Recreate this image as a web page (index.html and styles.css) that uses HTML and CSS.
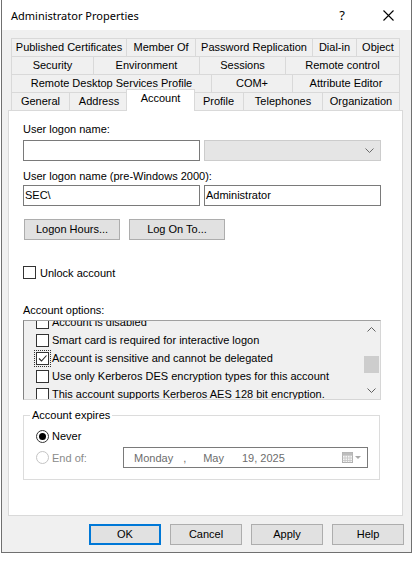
FILE: index.html
```html
<!DOCTYPE html>
<html>
<head>
<meta charset="utf-8">
<title>Administrator Properties</title>
<link rel="stylesheet" href="styles.css">
</head>
<body>
<div class="window">
  <div class="titlebar">
    <span class="title">Administrator Properties</span>
    <span class="help">?</span>
    <span class="close"><svg width="11" height="11" viewBox="0 0 11 11"><path d="M0.5 0.5L10.5 10.5M10.5 0.5L0.5 10.5" stroke="#000" stroke-width="1.1" fill="none"/></svg></span>
  </div>
  <div class="client">
    <div class="tabs">
      <div class="tabrow">
        <div class="tab t-pub">Published Certificates</div>
        <div class="tab t-mem">Member Of</div>
        <div class="tab t-pwd">Password Replication</div>
        <div class="tab t-dial">Dial-in</div>
        <div class="tab t-obj last">Object</div>
      </div>
      <div class="tabrow">
        <div class="tab t-sec">Security</div>
        <div class="tab t-env">Environment</div>
        <div class="tab t-ses">Sessions</div>
        <div class="tab t-rc last">Remote control</div>
      </div>
      <div class="tabrow">
        <div class="tab t-rds">Remote Desktop Services Profile</div>
        <div class="tab t-com">COM+</div>
        <div class="tab t-attr last">Attribute Editor</div>
      </div>
      <div class="tabrow">
        <div class="tab t-gen">General</div>
        <div class="tab t-addr">Address</div>
        <div class="tab t-acc sel">Account</div>
        <div class="tab t-prof">Profile</div>
        <div class="tab t-tel">Telephones</div>
        <div class="tab t-org last">Organization</div>
      </div>
    </div>
    <div class="panel">
      <div class="lbl l1">User logon name:</div>
      <div class="fieldrow r1">
        <div class="textbox"></div>
        <div class="combo"><svg width="9" height="5" viewBox="0 0 9 5"><path d="M0.5 0.5L4.5 4.5L8.5 0.5" stroke="#6a6a6a" fill="none"/></svg></div>
      </div>
      <div class="lbl l2">User logon name (pre-Windows 2000):</div>
      <div class="fieldrow r2">
        <div class="textbox">SEC\</div>
        <div class="textbox">Administrator</div>
      </div>
      <div class="btnrow">
        <div class="btn wide">Logon Hours...</div>
        <div class="btn wide">Log On To...</div>
      </div>
      <div class="chkrow">
        <span class="chk"></span>
        <span>Unlock account</span>
      </div>
      <div class="lbl l3">Account options:</div>
      <div class="list">
        <div class="items">
          <div class="item first"><span class="chk"></span><span>Account is disabled</span></div>
          <div class="item"><span class="chk"></span><span>Smart card is required for interactive logon</span></div>
          <div class="item"><span class="focus"><span class="chk"><svg width="11" height="11" viewBox="0 0 11 11"><path d="M2 5.5L4.5 8L9.5 2.5" stroke="#222" stroke-width="1.1" fill="none"/></svg></span></span><span>Account is sensitive and cannot be delegated</span></div>
          <div class="item"><span class="chk"></span><span>Use only Kerberos DES encryption types for this account</span></div>
          <div class="item"><span class="chk"></span><span>This account supports Kerberos AES 128 bit encryption.</span></div>
        </div>
        <div class="scrollbar">
          <div class="sbtn"><svg width="9" height="5" viewBox="0 0 9 5"><path d="M0.5 4.5L4.5 0.5L8.5 4.5" stroke="#606060" fill="none"/></svg></div>
          <div class="track"><div class="thumb"></div></div>
          <div class="sbtn"><svg width="9" height="5" viewBox="0 0 9 5"><path d="M0.5 0.5L4.5 4.5L8.5 0.5" stroke="#606060" fill="none"/></svg></div>
        </div>
      </div>
      <fieldset class="expires">
        <legend>Account expires</legend>
        <div class="opt never">
          <span class="radio on"><span class="dot"></span></span>
          <span>Never</span>
        </div>
        <div class="opt endof">
          <span class="radio off"></span>
          <span class="dis">End of:</span>
          <div class="dtp">
            <span class="d-day">Monday</span>
            <span class="d-comma">,</span>
            <span class="d-mon">May</span>
            <span class="d-date">19, 2025</span>
            <span class="cal"><svg width="20" height="11" viewBox="0 0 20 11"><rect x="0.5" y="0.5" width="10" height="10" fill="#f4f4f4" stroke="#b0b0b0"/><path d="M0.5 3.5H10.5M0.5 6H10.5M0.5 8.5H10.5M3 3.5V10.5M5.5 3.5V10.5M8 3.5V10.5" stroke="#c4c4c4" stroke-width="0.8"/><rect x="0.5" y="0.5" width="10" height="2.5" fill="#bdbdbd"/><path d="M13 4L19 4L16 7Z" fill="#a8a8a8"/></svg></span>
          </div>
        </div>
      </fieldset>
    </div>
    <div class="buttons">
      <div class="btn dlg default">OK</div>
      <div class="btn dlg">Cancel</div>
      <div class="btn dlg">Apply</div>
      <div class="btn dlg">Help</div>
    </div>
  </div>
</div>
</body>
</html>
```
FILE: styles.css
```css
body {
  margin: 0;
  background: #fff;
  font-family: "Liberation Sans", Arial, sans-serif;
  font-size: 11px;
  color: #000;
}

.window {
  margin-left: 1px;
  width: 411px;
  box-sizing: border-box;
  border: 1px solid #707070;
  border-top: none;
  background: #f0f0f0;
}

.titlebar {
  height: 30px;
  background: #fff;
  display: flex;
  align-items: center;
}

.title {
  font-family: "Noto Sans", "Liberation Sans", sans-serif;
  font-size: 11px;
  padding-left: 9px;
}

.help {
  margin-left: auto;
  width: 46px;
  text-align: center;
  font-family: "Noto Sans", "Liberation Sans", sans-serif;
  font-size: 13px;
}

.close {
  width: 46px;
  display: flex;
  justify-content: center;
}

.client {
  padding: 8px 8px 7px 6px;
}

.tabs {
  margin: 0 2px 0 3px;
}

.tabrow {
  display: flex;
  height: 18px;
}

.tab {
  flex: none;
  box-sizing: border-box;
  height: 18px;
  border-left: 1px solid #d9d9d9;
  border-top: 1px solid #d9d9d9;
  text-align: center;
  line-height: 17px;
  white-space: nowrap;
  overflow: hidden;
}

.tab.last {
  border-right: 1px solid #d9d9d9;
}

.t-pub { width: 115px; }
.t-mem { width: 69px; }
.t-pwd { width: 117px; }
.t-dial { width: 44px; }
.t-obj { width: 44px; }

.t-sec { width: 82px; }
.t-env { width: 106px; }
.t-ses { width: 86px; }
.t-rc { width: 115px; }

.t-rds { width: 200px; }
.t-com { width: 81px; }
.t-attr { width: 108px; }

.t-gen { width: 58px; }
.t-addr { width: 59px; }
.t-acc { width: 65px; }
.t-prof { width: 50px; }
.t-tel { width: 79px; }
.t-org { width: 78px; }

.tab.sel {
  position: relative;
  z-index: 2;
  width: 69px;
  height: 22px;
  margin: -3px -2px -1px -2px;
  background: #fff;
  border-right: 1px solid #d9d9d9;
}

.panel {
  box-sizing: border-box;
  height: 406px;
  background: #fff;
  border: 1px solid #d9d9d9;
  padding: 0 21px 0 14px;
}

.lbl {
  height: 13px;
  line-height: 13px;
}

.l1 { margin-top: 12px; }
.l2 { margin-top: 9px; }
.l3 { margin-top: 25px; }

.fieldrow {
  display: flex;
  gap: 4px;
  height: 21px;
}

.r1 { margin-top: 4px; }
.r2 { margin-top: 2px; }

.textbox {
  box-sizing: border-box;
  width: 177px;
  height: 21px;
  border: 1px solid #7a7a7a;
  background: #fff;
  line-height: 19px;
  padding-left: 1px;
}

.combo {
  box-sizing: border-box;
  width: 177px;
  height: 21px;
  border: 1px solid #cccccc;
  background: #e5e5e5;
  display: flex;
  align-items: center;
  justify-content: flex-end;
  padding-right: 6px;
}

.btnrow {
  margin-top: 13px;
  display: flex;
  gap: 9px;
  padding-left: 1px;
}

.btn {
  box-sizing: border-box;
  height: 21px;
  border: 1px solid #adadad;
  background: #e1e1e1;
  text-align: center;
  line-height: 19px;
}

.btn.wide { width: 96px; }

.chkrow {
  margin-top: 26px;
  display: flex;
  align-items: center;
  gap: 4px;
  height: 13px;
}

.chk {
  box-sizing: border-box;
  flex: none;
  width: 13px;
  height: 13px;
  border: 1px solid #333;
  background: #fff;
  display: flex;
  align-items: center;
  justify-content: center;
}

.list {
  margin-top: 3px;
  box-sizing: border-box;
  width: 358px;
  height: 80px;
  border: 1px solid #a0a0a0;
  border-left-color: #828282;
  border-right-color: #d6d6d6;
  border-bottom-color: #d6d6d6;
  background: #f0f0f0;
  display: flex;
}

.items {
  flex: 1;
  overflow: hidden;
}

.item {
  height: 18px;
  display: flex;
  align-items: center;
  gap: 3px;
  padding-left: 12px;
  white-space: nowrap;
}

.item.first {
  margin-top: -8px;
}

.focus {
  display: flex;
  outline: 1px dotted #333;
  outline-offset: 1px;
}

.scrollbar {
  width: 17px;
  display: flex;
  flex-direction: column;
  background: #f0f0f0;
}

.sbtn {
  height: 17px;
  display: flex;
  align-items: center;
  justify-content: center;
}

.track {
  flex: 1;
}

.thumb {
  margin: 18px 1px 0 1px;
  height: 17px;
  background: #cdcdcd;
}

.expires {
  margin: 9px 0 0 0;
  padding: 0 11px 11px 12px;
  box-sizing: border-box;
  width: 357px;
  border: 1px solid #dcdcdc;
}

.expires legend {
  padding: 0 2px;
  margin-left: -6px;
  line-height: 13px;
}

.opt {
  display: flex;
  align-items: center;
  gap: 3px;
}

.never {
  height: 18px;
  margin-top: 5px;
}

.endof {
  height: 21px;
  margin-top: 2px;
}

.radio {
  box-sizing: border-box;
  flex: none;
  width: 13px;
  height: 13px;
  border-radius: 50%;
  background: #fff;
  display: flex;
  align-items: center;
  justify-content: center;
}

.radio.on {
  border: 1px solid #333;
}

.radio.off {
  border: 1px solid #c4c4c4;
}

.dot {
  width: 7px;
  height: 7px;
  border-radius: 50%;
  background: #000;
}

.dis {
  color: #8a8a8a;
}

.dtp {
  margin-left: auto;
  box-sizing: border-box;
  width: 245px;
  height: 21px;
  border: 1px solid #7a7a7a;
  background: #fff;
  display: flex;
  align-items: center;
  color: #6d6d6d;
  padding-left: 10px;
  white-space: nowrap;
}

.d-comma { margin-left: 10px; }
.d-mon { margin-left: 17px; }
.d-date { margin-left: 18px; }

.cal {
  margin-left: auto;
  margin-right: 5px;
  display: flex;
}

.buttons {
  display: flex;
  justify-content: flex-end;
  gap: 9px;
  margin-top: 8px;
  margin-right: -1px;
}

.btn.dlg { width: 72px; }

.btn.default {
  border: 2px solid #0078d7;
  line-height: 17px;
}
```
